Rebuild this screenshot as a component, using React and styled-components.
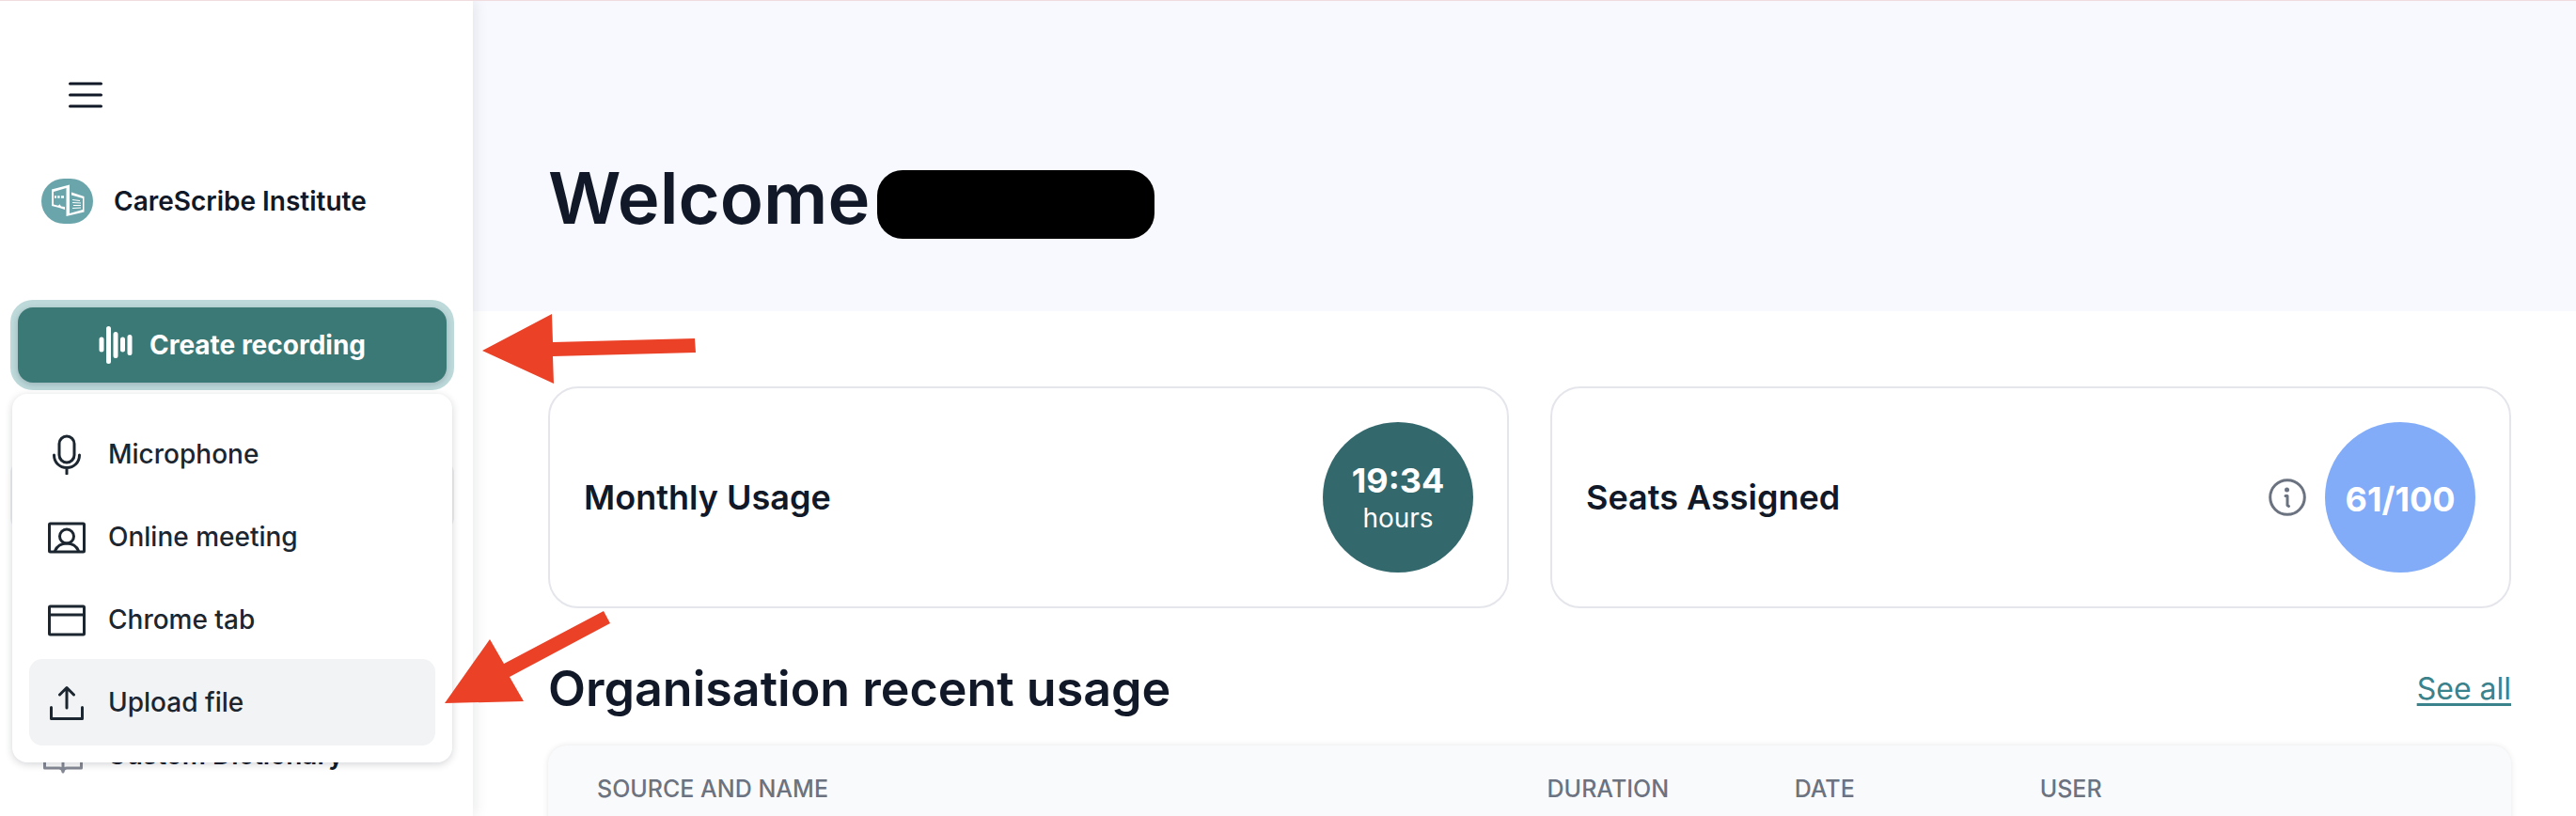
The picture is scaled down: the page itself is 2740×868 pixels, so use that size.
import React from "react";
import styled, { createGlobalStyle, css } from "styled-components";

const GlobalStyle = createGlobalStyle`
  *, *::before, *::after { box-sizing: border-box; }
  body { margin: 0; background: #fff; color: #111827; font-family: Inter, "Liberation Sans", sans-serif; font-size: 28px; line-height: 40px; }
  h1, h2, h3, p, ul { margin: 0; padding: 0; }
  button { font: inherit; color: inherit; border: 0; background: none; padding: 0; cursor: pointer; }
  svg { display: block; flex: none; }
`;

const Shell = styled.div`
  position: relative;
  display: flex;
  height: 100vh;
  overflow: hidden;
  border-top: 1px solid #f0dcdf;
`;

const Sidebar = styled.aside`
  position: relative;
  z-index: 1;
  flex: none;
  width: 503px;
  padding: 76px 20px 0 11px;
  background: #fff;
  box-shadow: 0 0 16px rgba(17, 24, 39, 0.12);
`;

const MenuToggle = styled.button`
  display: block;
  margin-left: 56px;
`;

const Brand = styled.div`
  display: flex;
  align-items: center;
  gap: 22px;
  margin: 65px 0 89px 33px;
  font-weight: 600;
`;

const CreateArea = styled.div`
  position: relative;
  padding: 0 8px;
`;

const CreateButton = styled.button`
  display: flex;
  align-items: center;
  justify-content: center;
  gap: 18px;
  width: 100%;
  height: 80px;
  border-radius: 16px;
  background: #3b7977;
  color: #fff;
  font-weight: 700;
  box-shadow: 0 2px 6px rgba(17, 24, 39, 0.2), 0 0 0 8px #bdd9da;
`;

const Menu = styled.ul`
  position: absolute;
  z-index: 2;
  top: 92px;
  left: 2px;
  right: 2px;
  padding: 18px;
  list-style: none;
  background: #fff;
  border-radius: 16px;
  box-shadow: 0 2px 8px rgba(17, 24, 39, 0.18);
`;

const MenuItem = styled.li`
  & + & { margin-top: -4px; }
`;

const MenuAction = styled.button`
  display: flex;
  align-items: center;
  gap: 24px;
  width: 100%;
  height: 92px;
  padding-left: 20px;
  border-radius: 14px;
  color: #1c2630;
  font-weight: 500;
  background: ${(p) => (p.$active ? "#f2f3f5" : "transparent")};
`;

const Nav = styled.nav`
  margin-top: 84px;
`;

const NavLink = styled.a`
  display: flex;
  align-items: center;
  gap: 26px;
  height: 72px;
  padding-left: 35px;
  border-radius: 12px;
  color: #111827;
  font-weight: 600;
  text-decoration: none;
  background: ${(p) => (p.$current ? "#eeeff1" : "transparent")};
  & + & { margin-top: 204px; }
`;

const Main = styled.main`
  flex: 1;
  min-width: 0;
`;

const Hero = styled.header`
  display: flex;
  align-items: flex-start;
  gap: 8px;
  padding: 160px 69px 72px 80px;
  background: #f8f9fe;
`;

const PageTitle = styled.h1`
  font-size: 76px;
  line-height: 98px;
  font-weight: 600;
`;

const Redaction = styled.span`
  width: 295px;
  height: 73px;
  margin-top: 20px;
  border-radius: 27px;
  background: #000;
`;

const Content = styled.div`
  padding: 80px 69px 0 80px;
`;

const Cards = styled.div`
  display: grid;
  grid-template-columns: 1fr 1fr;
  gap: 44px;
`;

const Card = styled.section`
  display: flex;
  align-items: center;
  justify-content: space-between;
  padding: 36px;
  border: 2px solid #e5e6eb;
  border-radius: 32px;
`;

const CardTitle = styled.h3`
  font-size: 36px;
  line-height: 48px;
  font-weight: 600;
`;

const CardSide = styled.div`
  display: flex;
  align-items: center;
  gap: 20px;
`;

const Disc = styled.div`
  display: flex;
  flex-direction: column;
  align-items: center;
  justify-content: center;
  width: 160px;
  height: 160px;
  padding-top: 4px;
  border-radius: 50%;
  color: #fff;
  background: ${(p) => p.$color};
`;

const DiscValue = styled.strong`
  font-size: 36px;
  line-height: 40px;
  font-weight: 700;
`;

const DiscUnit = styled.span`
  font-size: 28px;
  line-height: 40px;
`;

const SectionHead = styled.div`
  display: flex;
  align-items: center;
  justify-content: space-between;
  margin: 50px 0 24px;
`;

const SectionTitle = styled.h2`
  font-size: 52px;
  line-height: 72px;
  font-weight: 600;
`;

const SeeAll = styled.a`
  font-size: 32px;
  line-height: 40px;
  color: #3a828c;
  text-underline-offset: 4px;
`;

const UsageTable = styled.table`
  width: 100%;
  table-layout: fixed;
  border-collapse: collapse;
  border-radius: 20px 20px 0 0;
  background: #f9fafc;
  box-shadow: 0 0 6px rgba(17, 24, 39, 0.1);
`;

const HeadCell = styled.th`
  width: ${(p) => p.$width};
  height: 92px;
  padding: 0 0 0 52px;
  text-align: left;
  font-size: 25px;
  line-height: 32px;
  font-weight: 500;
  color: #6b7280;
  text-transform: uppercase;
`;

const Arrows = styled.svg`
  position: absolute;
  z-index: 3;
  top: 0;
  left: 0;
  pointer-events: none;
`;

const HamburgerIcon = () => (
  <svg width="48" height="48" viewBox="0 0 48 48" stroke="#111827" strokeWidth="3" strokeLinecap="round">
    <path d="M7.500 12h33M7.500 24h33M7.500 36h33" />
  </svg>
);

const BrandMark = () => (
  <svg width="55" height="48" viewBox="0 0 55 48">
    <rect width="55" height="48" rx="24" fill="#6aa5ab" />
    <path
      fillRule="evenodd"
      fill="#fff"
      d="M11 11.500 30 6.500V37l14-4V21l-12-3.500v-3L45.500 19v16.500L26.500 40V10L13 14v13.500l5 1.200 1.500-1.500L21 29.500l4 .5v3l-6-2-8-2Z"
    />
    <path d="M14 19.500h2M17.200 19.500h2.400M21 19.500h3" stroke="#fff" strokeWidth="2.400" />
    <path d="M33 22.500l8 1M33 25.500l9 .5M34 28.500h8M33 31.500l9-.5" stroke="#fff" strokeWidth="1" />
  </svg>
);

const WaveIcon = () => (
  <svg width="36" height="42" viewBox="0 0 36 42" stroke="#fff" strokeWidth="5" strokeLinecap="round">
    <path d="M3 15v11M10.500 3.500v35M18 9.500v23M25.500 15v11M33 12.500v17" />
  </svg>
);

const lineIcon = css`
  fill: none;
  stroke: #1c2630;
  stroke-width: 3;
  stroke-linecap: round;
  stroke-linejoin: round;
`;
const LineSvg = styled.svg.attrs({ width: 40, height: 44, viewBox: "0 0 40 44" })`
  ${lineIcon}
`;

const MicIcon = () => (
  <LineSvg>
    <rect x="12" y="3" width="16" height="28" rx="8" />
    <path d="M6.500 23c0 8 6 13.500 13.500 13.500S33.500 31 33.500 23M20 37v6" />
  </LineSvg>
);
const MeetingIcon = () => (
  <LineSvg>
    <rect x="1.500" y="8" width="37" height="30" rx="1" />
    <circle cx="20" cy="21.500" r="7.500" />
    <path d="M7.500 37c2-5 7-8 12.500-8s10.500 3 12.500 8" />
  </LineSvg>
);
const TabIcon = () => (
  <LineSvg>
    <rect x="1.500" y="8" width="37" height="30" rx="1" />
    <path d="M2 17h36" />
  </LineSvg>
);
const UploadIcon = () => (
  <LineSvg>
    <path d="M20 28V6.500M12.500 14 20 6.500l7.500 7.500M3.500 27.500v12h33v-12" />
  </LineSvg>
);
const BookIcon = () => (
  <svg width="42" height="44" viewBox="0 0 42 44" fill="none" stroke="#858995" strokeWidth="3" strokeLinejoin="round">
    <path d="M1.500 6H16q5 0 5 4 0-4 5-4h14.500v30H25q-3.500 0-4 4-.5-4-4-4H1.500ZM21 10v30" />
  </svg>
);
const InfoIcon = () => (
  <svg width="40" height="40" viewBox="0 0 40 40" fill="none" stroke="#6b7280" strokeWidth="3" strokeLinecap="round" strokeLinejoin="round">
    <circle cx="20" cy="20" r="18.300" />
    <path d="M18 18.500h2v10l1.500 1" />
    <circle cx="19.500" cy="12" r="2.500" fill="#6b7280" stroke="none" />
  </svg>
);

const actions = [
  { label: "Microphone", Icon: MicIcon },
  { label: "Online meeting", Icon: MeetingIcon },
  { label: "Chrome tab", Icon: TabIcon },
  { label: "Upload file", Icon: UploadIcon, active: true },
];

const columns = [
  { label: "Source and name", width: "48.4%" },
  { label: "Duration", width: "12.6%" },
  { label: "Date", width: "12.5%" },
  { label: "User", width: "26.5%" },
];

export default function App() {
  return (
    <>
      <GlobalStyle />
      <Shell>
        <Sidebar>
          <MenuToggle aria-label="Toggle menu"><HamburgerIcon /></MenuToggle>
          <Brand><BrandMark />CareScribe Institute</Brand>
          <CreateArea>
            <CreateButton aria-expanded="true"><WaveIcon />Create recording</CreateButton>
            <Menu>
              {actions.map(({ label, Icon, active }) => (
                <MenuItem key={label}>
                  <MenuAction $active={active}><Icon />{label}</MenuAction>
                </MenuItem>
              ))}
            </Menu>
          </CreateArea>
          <Nav>
            <NavLink href="#" $current aria-label="Current page" />
            <NavLink href="#"><BookIcon />Custom Dictionary</NavLink>
          </Nav>
        </Sidebar>
        <Main>
          <Hero>
            <PageTitle>Welcome</PageTitle>
            <Redaction />
          </Hero>
          <Content>
            <Cards>
              <Card>
                <CardTitle>Monthly Usage</CardTitle>
                <Disc $color="#33686d">
                  <DiscValue>19:34</DiscValue>
                  <DiscUnit>hours</DiscUnit>
                </Disc>
              </Card>
              <Card>
                <CardTitle>Seats Assigned</CardTitle>
                <CardSide>
                  <InfoIcon />
                  <Disc $color="#82acf8"><DiscValue>61/100</DiscValue></Disc>
                </CardSide>
              </Card>
            </Cards>
            <SectionHead>
              <SectionTitle>Organisation recent usage</SectionTitle>
              <SeeAll href="#">See all</SeeAll>
            </SectionHead>
            <UsageTable>
              <thead>
                <tr>
                  {columns.map((c) => (
                    <HeadCell key={c.label} $width={c.width}>{c.label}</HeadCell>
                  ))}
                </tr>
              </thead>
            </UsageTable>
          </Content>
        </Main>
        <Arrows width="780" height="800" viewBox="0 1 780 800" fill="#ea4127" aria-hidden="true">
          <path d="M513 373 587 334 588 364 739 360 740 375 588 379 589 408Z" />
          <path d="M473 748 521 680 536 706 642 650 649 663 542 720 557 746Z" />
        </Arrows>
      </Shell>
    </>
  );
}
